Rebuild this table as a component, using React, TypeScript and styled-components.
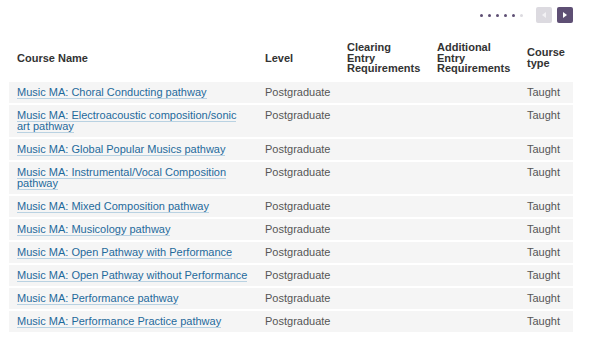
import styled, { createGlobalStyle } from "styled-components";

const GlobalStyle = createGlobalStyle`
  body {
    margin: 0;
    background: #fff;
    font-family: "Liberation Sans", Arial, sans-serif;
  }
`;

const Page = styled.div`
  width: 564px;
  padding-left: 9px;
`;

const Pager = styled.div`
  display: flex;
  align-items: center;
  justify-content: flex-end;
  height: 16px;
  padding: 7px 0;
`;

const Dots = styled.div`
  display: flex;
  gap: 5px;
  margin-right: 8px;
`;

const Dot = styled.span<{ $active: boolean }>`
  width: 3px;
  height: 3px;
  border-radius: 50%;
  background: ${({ $active }) => ($active ? "#5e4f74" : "#dcdae0")};
`;

const PageButton = styled.button<{ $enabled: boolean }>`
  width: 16px;
  height: 16px;
  margin-left: 5px;
  padding: 0;
  border: 0;
  border-radius: 2px;
  display: flex;
  align-items: center;
  justify-content: center;
  background: ${({ $enabled }) => ($enabled ? "#5e4f74" : "#dcdae0")};
  color: ${({ $enabled }) => ($enabled ? "#ffffff" : "#f2f1f4")};
`;

const Table = styled.table`
  width: 564px;
  margin-top: 4px;
  border-collapse: collapse;
  table-layout: fixed;
`;

const HeadCell = styled.th<{ $width: number }>`
  box-sizing: border-box;
  width: ${({ $width }) => $width}px;
  padding: 8px;
  text-align: left;
  vertical-align: middle;
  font-size: 11px;
  line-height: 10.5px;
  font-weight: bold;
  color: #333;
`;

const Row = styled.tr`
  background: #f5f5f5;
  border-bottom: 2px solid #fff;
`;

const Cell = styled.td`
  padding: 5px 8px;
  vertical-align: top;
  font-size: 11px;
  line-height: 11px;
  color: #555;
`;

const CourseLink = styled.a`
  color: #1f6a9c;
  text-decoration: none;
  border-bottom: 1px solid #b9d2e2;
`;

const courses = [
  "Music MA: Choral Conducting pathway",
  "Music MA: Electroacoustic composition/sonic art pathway",
  "Music MA: Global Popular Musics pathway",
  "Music MA: Instrumental/Vocal Composition pathway",
  "Music MA: Mixed Composition pathway",
  "Music MA: Musicology pathway",
  "Music MA: Open Pathway with Performance",
  "Music MA: Open Pathway without Performance",
  "Music MA: Performance pathway",
  "Music MA: Performance Practice pathway",
];

function Arrow({ dir }: { dir: "left" | "right" }) {
  return (
    <svg width="4" height="6" viewBox="0 0 4 6">
      <path d={dir === "left" ? "M4 0 L0 3 L4 6 Z" : "M0 0 L4 3 L0 6 Z"} fill="currentColor" />
    </svg>
  );
}

export default function App() {
  return (
    <Page>
      <GlobalStyle />
      <Pager>
        <Dots>
          {[0, 1, 2, 3, 4, 5].map((i) => (
            <Dot key={i} $active={i < 5} />
          ))}
        </Dots>
        <PageButton $enabled={false} aria-label="Previous">
          <Arrow dir="left" />
        </PageButton>
        <PageButton $enabled aria-label="Next">
          <Arrow dir="right" />
        </PageButton>
      </Pager>
      <Table>
        <thead>
          <tr>
            <HeadCell $width={248}>Course Name</HeadCell>
            <HeadCell $width={82}>Level</HeadCell>
            <HeadCell $width={90}>
              Clearing
              <br />
              Entry
              <br />
              Requirements
            </HeadCell>
            <HeadCell $width={90}>
              Additional
              <br />
              Entry
              <br />
              Requirements
            </HeadCell>
            <HeadCell $width={54}>
              Course
              <br />
              type
            </HeadCell>
          </tr>
        </thead>
        <tbody>
          {courses.map((name) => (
            <Row key={name}>
              <Cell>
                <CourseLink href="#">{name}</CourseLink>
              </Cell>
              <Cell>Postgraduate</Cell>
              <Cell />
              <Cell />
              <Cell>Taught</Cell>
            </Row>
          ))}
        </tbody>
      </Table>
    </Page>
  );
}
